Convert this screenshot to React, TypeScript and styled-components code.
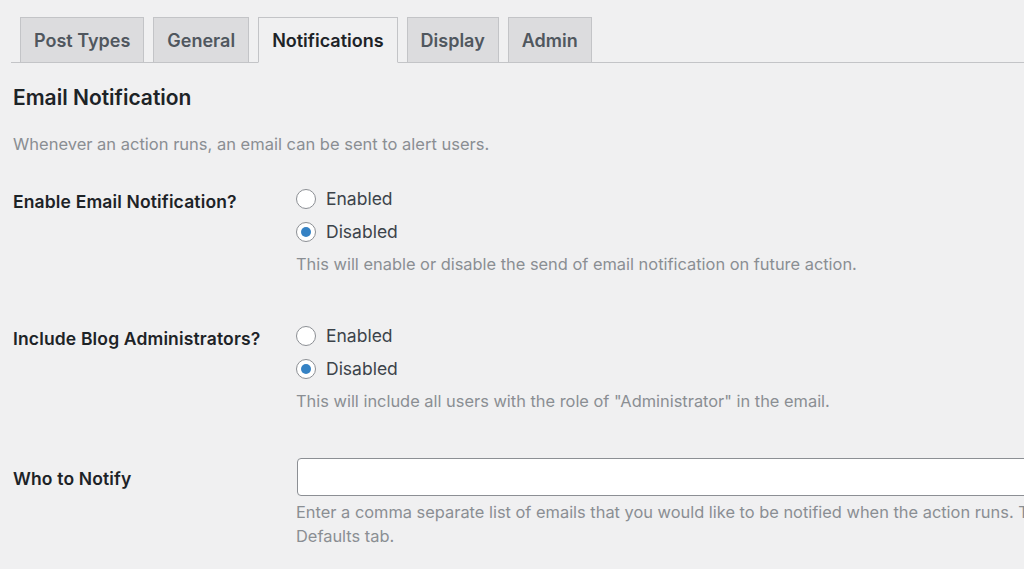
import React, { useState } from 'react';
import styled, { createGlobalStyle } from 'styled-components';

const GlobalStyle = createGlobalStyle`
  html, body {
    margin: 0;
    padding: 0;
    background: #f0f0f1;
    overflow: hidden;
  }
  body {
    font-family: Inter, 'Noto Sans', sans-serif;
    color: #3c434a;
  }
`;

const tabs = ['Post Types', 'General', 'Notifications', 'Display', 'Admin'];

interface RadioGroupProps {
  name: string;
  description: string;
}

const RadioGroup: React.FC<RadioGroupProps> = ({ name, description }) => {
  const [value, setValue] = useState('disabled');
  return (
    <Field>
      <Option>
        <RadioInput
          type="radio"
          name={name}
          checked={value === 'enabled'}
          onChange={() => setValue('enabled')}
        />
        Enabled
      </Option>
      <Option>
        <RadioInput
          type="radio"
          name={name}
          checked={value === 'disabled'}
          onChange={() => setValue('disabled')}
        />
        Disabled
      </Option>
      <Description>{description}</Description>
    </Field>
  );
};

const App: React.FC = () => {
  const [active, setActive] = useState('Notifications');

  return (
    <Page>
      <GlobalStyle />
      <TabBar>
        {tabs.map((tab) => (
          <Tab key={tab} $active={tab === active} onClick={() => setActive(tab)}>
            {tab}
          </Tab>
        ))}
      </TabBar>

      <Heading>Email Notification</Heading>
      <Intro>Whenever an action runs, an email can be sent to alert users.</Intro>

      <Row>
        <Label>Enable Email Notification?</Label>
        <RadioGroup
          name="email-notification"
          description="This will enable or disable the send of email notification on future action."
        />
      </Row>

      <Row>
        <Label>Include Blog Administrators?</Label>
        <RadioGroup
          name="blog-admins"
          description={'This will include all users with the role of "Administrator" in the email.'}
        />
      </Row>

      <Row>
        <Label $inputRow>Who to Notify</Label>
        <Field>
          <TextInput type="text" />
          <Description>
            Enter a comma separate list of emails that you would like to be notified when the action runs. This
            will be merged with the list set on the
            <br />
            Defaults tab.
          </Description>
        </Field>
      </Row>
    </Page>
  );
};

const Page = styled.div`
  width: 1500px;
  padding: 0 0 0 11px;
`;

const TabBar = styled.nav`
  display: flex;
  align-items: flex-end;
  gap: 9px;
  padding: 17px 0 0 9px;
  border-bottom: 1px solid #c3c4c7;
`;

const Tab = styled.button<{ $active?: boolean }>`
  height: 46px;
  margin-bottom: -1px;
  padding: 0 13px;
  font-family: inherit;
  font-size: 18px;
  font-weight: 600;
  color: ${(p) => (p.$active ? '#1d2327' : '#50575e')};
  background: ${(p) => (p.$active ? '#f0f0f1' : '#dcdcde')};
  border: 1px solid #c3c4c7;
  border-bottom-color: ${(p) => (p.$active ? '#f0f0f1' : '#c3c4c7')};
  cursor: pointer;
`;

const Heading = styled.h2`
  margin: 20px 0 0 2px;
  font-size: 21px;
  line-height: 29px;
  font-weight: 600;
  color: #1d2327;
`;

const Intro = styled.p`
  margin: 20px 0 0 2px;
  font-size: 16.5px;
  line-height: 24px;
  color: #8a8e93;
`;

const Row = styled.div`
  display: grid;
  grid-template-columns: 283px 1fr;
  padding: 26px 0 17px 2px;
`;

const Label = styled.div<{ $inputRow?: boolean }>`
  padding-top: ${(p) => (p.$inputRow ? '11px' : '8px')};
  font-size: 17.5px;
  line-height: 24px;
  font-weight: 600;
  letter-spacing: 0.15px;
  color: #1d2327;
`;

const Field = styled.div`
  display: flex;
  flex-direction: column;
  align-items: flex-start;
`;

const Option = styled.label`
  display: flex;
  align-items: center;
  gap: 10px;
  height: 33px;
  font-size: 17.5px;
  color: #3c434a;
  cursor: pointer;
`;

const RadioInput = styled.input`
  appearance: none;
  box-sizing: border-box;
  width: 20px;
  height: 20px;
  margin: 0;
  border: 1px solid #8c8f94;
  border-radius: 50%;
  background: #fff;
  display: grid;
  place-items: center;
  cursor: pointer;

  &:checked::before {
    content: '';
    width: 10px;
    height: 10px;
    border-radius: 50%;
    background: #3582c4;
  }
`;

const Description = styled.p`
  margin: 4px 0 0;
  font-size: 16.4px;
  line-height: 24px;
  color: #8a8e93;
  white-space: nowrap;
`;

const TextInput = styled.input`
  box-sizing: border-box;
  width: 900px;
  height: 38px;
  margin: 2px 0 0 1px;
  border: 1px solid #8c8f94;
  border-radius: 4px;
  background: #fff;
`;

export default App;
